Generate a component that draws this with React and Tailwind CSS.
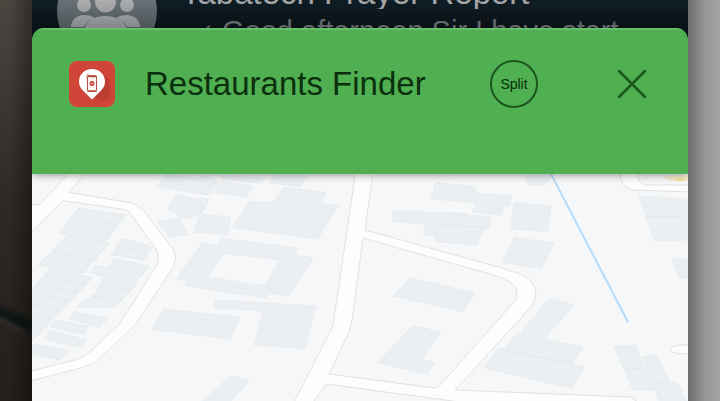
import React from 'react';

function GroupAvatar() {
  return (
    <svg viewBox="0 0 100 100" className="-mt-[39px] h-[100px] w-[100px] shrink-0" aria-hidden="true">
      <defs>
        <linearGradient id="avatar" x1="0" y1="0" x2="0" y2="1">
          <stop offset="0.4" stopColor="#667075" />
          <stop offset="0.7" stopColor="#4b5256" />
        </linearGradient>
        <linearGradient id="people" gradientUnits="userSpaceOnUse" x1="0" y1="39" x2="0" y2="67">
          <stop offset="0" stopColor="#acaeb0" />
          <stop offset="1" stopColor="#85888a" />
        </linearGradient>
      </defs>
      <circle cx="50" cy="50" r="50" fill="url(#avatar)" />
      <g fill="url(#people)">
        <circle cx="27" cy="44" r="7" />
        <circle cx="70" cy="44" r="7" />
        <circle cx="48.500" cy="41" r="10.500" />
        <path d="M14 66c0-7 6-12 13-12 5 0 8 1 11 3-6 2-9 5-11 9z" />
        <path d="M83 66c0-7-6-12-13-12-5 0-8 1-11 3 6 2 9 5 11 9z" />
        <path d="M27 72c0-11 9-17 21.500-17S70 61 70 72z" />
      </g>
    </svg>
  );
}

function ChatRow() {
  return (
    <div className="flex h-7 items-start gap-6 overflow-hidden bg-linear-to-b from-[#101d25] to-[#0a1116] pl-[25px] pr-6">
      <GroupAvatar />
      <div className="-mt-[23px] min-w-0 flex-1">
        <div className="flex items-start justify-between">
          <p className="truncate text-[33px] leading-8 text-[#a3a5a7]">Tabatech Prayer Report</p>
          <p className="shrink-0 text-[22px] leading-8 text-[#50575b]">9:42 PM</p>
        </div>
        <p className="mt-1.5 flex gap-2 whitespace-nowrap pl-4 text-[29px] leading-8 text-[#62686b]">
          <span className="text-xl leading-8">✓</span>
          <span>Good afternoon Sir I have start...</span>
        </p>
      </div>
    </div>
  );
}

function AppIcon() {
  return (
    <svg viewBox="0 0 46 46" className="size-[46px] shrink-0" aria-hidden="true">
      <rect width="46" height="46" rx="8" fill="#cf4538" />
      <path d="M34 13l7 7v16l-3 4H31l-7-4z" fill="#bf3e34" />
      <path d="M23 8c-7.500 0-13 5.500-13 12.500 0 6 4 9 7.500 12.500 2.500 2.500 4 4 5.500 5.500 1.500-1.500 3-3 5.500-5.500C32 29.500 36 26.500 36 20.500 36 13.500 30.500 8 23 8z" fill="#fff" />
      <rect x="18.500" y="14.500" width="9" height="16" rx="1" fill="#fdf6f3" stroke="#b5533f" />
      <path d="M18.500 15.500h9M18.500 30h9" stroke="#b5533f" strokeWidth="1.500" />
      <circle cx="23" cy="22.500" r="2.500" fill="#cf4538" />
      <path d="M21.500 22.500h3" stroke="#f3dcd6" strokeWidth="0.800" />
      <path d="M17 17l1-2M17 14l3-1" stroke="#d3877b" strokeWidth="0.800" />
    </svg>
  );
}

function StreetMap() {
  return (
    <svg viewBox="32 174 656 227" preserveAspectRatio="xMidYMin slice" className="block min-h-[227px] w-full flex-1 bg-[#f6f7f8]" role="img" aria-label="Map">
      <g transform="translate(0 160) scale(0.333333)">
        <path d="M205 40L120 133L90 135V218L190 122L370 148L388 156L466 265L475 285L473 312L360 490L265 580L235 597L90 634V663L240 625L285 608L405 495L520 320L527 295L521 270L430 150L400 130L208 97L254 40Z" fill="#fdfdfd" stroke="#e1e1e1" strokeWidth="3" />
        <g fill="#eceff1" stroke="#e3e7e9" strokeWidth="2">
          <path d="M236 145L378 165L312 250L175 220Z" />
          <path d="M205 224L326 250L250 340L115 316Z" />
          <path d="M150 328L278 352L100 540H90V392Z" />
          <path d="M368 236L458 260L430 300L332 284Z" />
          <path d="M340 296L448 318L405 370L270 340L285 317L328 323Z" />
          <path d="M308 356L410 374L346 440L232 442L254 417H268L290 396Z" />
          <path d="M224 455L322 475L300 502L208 477Z" />
          <path d="M165 480L268 500L252 523L152 502Z" />
          <path d="M150 512L260 540L242 562L132 538Z" />
          <path d="M108 552L208 574L180 600L90 580V557Z" />
        </g>
        <g fill="none" stroke="#e1e5e7" strokeWidth="2">
          <path d="M220 170L355 195M195 197L330 220M187 250L305 275M160 275L290 302M137 350L260 374M118 374L235 400M98 400L215 425M90 430L190 455M90 463L160 480" />
          <path d="M350 258L440 278M325 320L430 342M300 376L390 392M270 407L370 425" />
        </g>
        <g fill="#eceff1" stroke="#e6e9eb" strokeWidth="2">
          <path d="M500 42L656 65L622 105L470 80Z" />
          <path d="M526 105L626 124L602 164L546 178L524 156L503 150Z" />
          <path d="M470 184L536 173L566 225L510 230Z" />
          <path d="M596 163L692 170L680 224L582 217Z" />
          <path d="M492 447L720 472L690 538L456 508Z" />
        </g>
      </g>
      <g transform="translate(200 160) scale(0.333333)">
        <g fill="#eceff1" stroke="#e6e9eb" strokeWidth="2">
          <path d="M0 45L46 60L32 104L0 98Z" />
          <path d="M62 62L160 80L138 110L42 98Z" />
          <path d="M65 45L198 55L180 70L68 58Z" />
          <path d="M225 42H330L302 80L205 68Z" />
          <path d="M252 82L380 97L360 130L415 138L352 237L98 203L150 124L220 129Z" />
          <path d="M0 112L25 119L0 162Z" />
          <path fillRule="evenodd" d="M66 235L294 264L286 286L340 292L264 408L205 400L200 414L-45 377L-40 362L-70 358L5 250L50 255ZM74 280L22 350L192 378L242 300Z" />
          <path d="M48 420L348 438L314 566L162 555L190 452L40 444Z" />
          <path d="M92 647L148 662L85 730H0Z" />
          <path d="M708 67L780 78V123L694 116Z" />
          <path d="M580 153L800 160V248L706 246L702 226L670 225L674 192L576 184Z" />
          <path d="M630 354L825 399L790 455L578 408Z" />
          <path d="M638 496L724 518L662 598L704 608L680 643L534 607Z" />
        </g>
      </g>
      <g transform="translate(440 160) scale(0.333333)">
        <g fill="#eceff1" stroke="#e5e8ea" strokeWidth="2">
          <path d="M248 42H338L318 74L268 77Z" />
          <path d="M-12 68L108 80L106 100L216 108L206 136L192 138L185 166L97 156L109 130L-25 116Z" />
          <path d="M0 160L154 171L146 204L128 208L112 255L0 245" />
          <path d="M222 128L334 137L322 214L212 207Z" />
          <path d="M224 232L344 250L304 326L188 308Z" />
          <path d="M328 415L402 434L318 531L244 515Z" />
          <path d="M232 518L428 562L398 612L432 622L394 684L132 624L172 568L194 565Z" />
          <path d="M520 558L586 556L642 690H580Z" />
          <path d="M608 590L650 584L690 666L714 672L740 725H658Z" />
          <path d="M596 108L750 118V240L644 242Z" />
          <path d="M694 296H750V355H718Z" />
        </g>
        <path d="M180 568L398 612M0 195L145 203M555 630L607 624M615 170H715L750 185M645 673L690 668" fill="none" stroke="#dfe3e5" strokeWidth="2" />
      </g>
      <g fill="#fdfdfd" stroke="#dfe1e3" strokeWidth="1">
        <path d="M356 170L350 210L333 326Q332 330 329 334L290 410H308L326 384L430 398L520 410H650L630 397L455 390L530 308Q536 300 536 292Q534 280 520 274L502 268L365 230L373 170ZM363 238L490 274Q516 281 517 292L516 300L441 384Q438 389 434 388L329 374L349 332L352 320Z" fillRule="evenodd" />
        <path d="M620 170Q619 188 634 190L690 192V185H646Q637 184 637 170Z" />
        <path d="M692 345H679Q669 347 670 350Q673 355 692 353Z" />
      </g>
      <path d="M662 177L688 175V181H672Z" fill="#f8eccb" />
      <path d="M676 180H684" stroke="#f1d36a" />
      <path d="M551 174L628 322" stroke="#b5dbfb" strokeWidth="2" />
    </svg>
  );
}

export default function App() {
  return (
    <div className="flex min-h-screen font-['Liberation_Sans',Arial,sans-serif]">
      <div className="w-8 shrink-0 bg-linear-to-b from-[#4b4640] via-[#2e2925] to-[#241f1c]">
        <svg viewBox="0 0 32 401" preserveAspectRatio="none" className="h-full w-full" aria-hidden="true">
          <defs>
            <linearGradient id="edge">
              <stop offset="0.3" stopColor="#000" stopOpacity="0" />
              <stop offset="1" stopColor="#000" stopOpacity="0.35" />
            </linearGradient>
            <filter id="soft"><feGaussianBlur stdDeviation="2" /></filter>
          </defs>
          <path d="M-4 304L34 321V331L20 329L-4 317Z" fill="#101713" filter="url(#soft)" />
          <path d="M-2 318L24 332" stroke="#45443e" strokeWidth="2" filter="url(#soft)" />
          <rect width="32" height="401" fill="url(#edge)" />
        </svg>
      </div>
      <main className="flex min-w-0 flex-1 flex-col bg-[#0a1116]">
        <ChatRow />
        <section className="flex flex-1 flex-col overflow-hidden rounded-t-xl">
          <header className="relative z-10 flex h-[146px] items-start border-t-2 border-[#69bd6c] bg-[#4faf51] pl-[37px] pr-10 pt-[30px] shadow-[0_1px_8px_rgba(0,0,0,0.4)]">
            <div className="flex h-12 flex-1 items-center">
              <AppIcon />
              <h1 className="ml-[30px] flex-1 whitespace-nowrap text-[33px] leading-10 text-[#0b300d]">Restaurants Finder</h1>
              <button type="button" className="size-12 rounded-full border-2 border-[#1d551f] text-sm text-[#0b300d]">Split</button>
              <button type="button" aria-label="Close" className="ml-[78px]">
                <svg viewBox="0 0 32 32" className="size-8" fill="none" stroke="#1d551f" strokeWidth="2.500" strokeLinecap="round" aria-hidden="true">
                  <path d="M3 3L29 29M29 3L3 29" />
                </svg>
              </button>
            </div>
          </header>
          <StreetMap />
        </section>
      </main>
      <div className="w-8 shrink-0 bg-[#a5a5a5]">
        <div className="h-full bg-linear-to-r from-black/35 via-black/10 to-transparent" />
      </div>
    </div>
  );
}
